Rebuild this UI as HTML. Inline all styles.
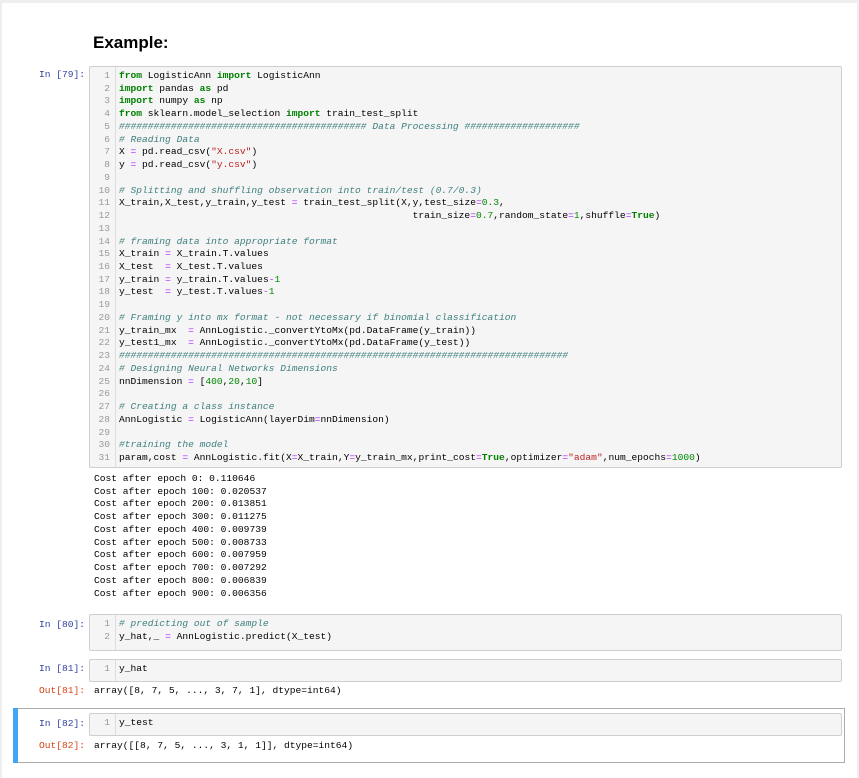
<!DOCTYPE html>
<html><head><style>
body{margin:0;width:859px;height:772px;background:#eee;position:relative;overflow:hidden;font-family:"Liberation Mono",monospace;}
#page{position:absolute;left:2px;top:3px;width:855px;height:775px;background:#fff;}
.a{position:absolute;}
.box{position:absolute;left:89px;width:751px;background:#f5f5f5;border:1px solid #cfcfcf;border-radius:2px;}
.gut{position:absolute;left:0;top:0;bottom:0;width:25px;border-right:1px solid #ddd;}
pre{margin:0;font-family:"Liberation Mono",monospace;font-size:9.6px;line-height:12.73px;color:#000;white-space:pre;}
.ln{position:absolute;left:0;width:20px;top:3px;text-align:right;color:#999;}
.code{position:absolute;left:29px;top:3px;}
.p{position:absolute;right:774px;font-size:9.6px;color:#303F9F;white-space:pre;}
.o{color:#D84315;}
.k{color:#008000;font-weight:bold}
.c{color:#408080;font-style:italic}
.e{color:#AA22FF}
.n{color:#080}
.s{color:#BA2121}
</style></head><body>
<div id="page"></div>
<div class="a" style="left:93px;top:33px;font-family:'Liberation Sans',sans-serif;font-weight:bold;font-size:17px;color:#000">Example:</div>

<div class="a p" style="top:69px">In [79]:</div>
<div class="box" style="top:66px;height:400px"><div class="gut"></div>
<pre class="ln">1
2
3
4
5
6
7
8
9
10
11
12
13
14
15
16
17
18
19
20
21
22
23
24
25
26
27
28
29
30
31</pre>
<pre class="code"><span class="k">from</span> LogisticAnn <span class="k">import</span> LogisticAnn
<span class="k">import</span> pandas <span class="k">as</span> pd
<span class="k">import</span> numpy <span class="k">as</span> np
<span class="k">from</span> sklearn.model_selection <span class="k">import</span> train_test_split
<span class="c">########################################### Data Processing ####################</span>
<span class="c"># Reading Data</span>
X <span class="e">=</span> pd.read_csv(<span class="s">"X.csv"</span>)
y <span class="e">=</span> pd.read_csv(<span class="s">"y.csv"</span>)

<span class="c"># Splitting and shuffling observation into train/test (0.7/0.3)</span>
X_train,X_test,y_train,y_test <span class="e">=</span> train_test_split(X,y,test_size<span class="e">=</span><span class="n">0.3</span>,
                                                   train_size<span class="e">=</span><span class="n">0.7</span>,random_state<span class="e">=</span><span class="n">1</span>,shuffle<span class="e">=</span><span class="k">True</span>)

<span class="c"># framing data into appropriate format</span>
X_train <span class="e">=</span> X_train.T.values
X_test  <span class="e">=</span> X_test.T.values
y_train <span class="e">=</span> y_train.T.values<span class="e">-</span><span class="n">1</span>
y_test  <span class="e">=</span> y_test.T.values<span class="e">-</span><span class="n">1</span>

<span class="c"># Framing y into mx format - not necessary if binomial classification</span>
y_train_mx  <span class="e">=</span> AnnLogistic._convertYtoMx(pd.DataFrame(y_train))
y_test1_mx  <span class="e">=</span> AnnLogistic._convertYtoMx(pd.DataFrame(y_test))
<span class="c">##############################################################################</span>
<span class="c"># Designing Neural Networks Dimensions</span>
nnDimension <span class="e">=</span> [<span class="n">400</span>,<span class="n">20</span>,<span class="n">10</span>]

<span class="c"># Creating a class instance</span>
AnnLogistic <span class="e">=</span> LogisticAnn(layerDim<span class="e">=</span>nnDimension)

<span class="c">#training the model</span>
param,cost <span class="e">=</span> AnnLogistic.fit(X<span class="e">=</span>X_train,Y<span class="e">=</span>y_train_mx,print_cost<span class="e">=</span><span class="k">True</span>,optimizer<span class="e">=</span><span class="s">"adam"</span>,num_epochs<span class="e">=</span><span class="n">1000</span>)</pre>
</div>
<pre class="a" style="left:94px;top:473px">Cost after epoch 0: 0.110646
Cost after epoch 100: 0.020537
Cost after epoch 200: 0.013851
Cost after epoch 300: 0.011275
Cost after epoch 400: 0.009739
Cost after epoch 500: 0.008733
Cost after epoch 600: 0.007959
Cost after epoch 700: 0.007292
Cost after epoch 800: 0.006839
Cost after epoch 900: 0.006356</pre>

<div class="a p" style="top:619px">In [80]:</div>
<div class="box" style="top:614px;height:35px"><div class="gut"></div>
<pre class="ln">1
2</pre>
<pre class="code"><span class="c"># predicting out of sample</span>
y_hat,_ <span class="e">=</span> AnnLogistic.predict(X_test)</pre></div>

<div class="a p" style="top:663px">In [81]:</div>
<div class="box" style="top:659px;height:21px"><div class="gut"></div>
<pre class="ln">1</pre><pre class="code">y_hat</pre></div>
<div class="a p o" style="top:685px">Out[81]:</div>
<pre class="a" style="left:94px;top:685px">array([8, 7, 5, ..., 3, 7, 1], dtype=int64)</pre>

<div class="a" style="left:13px;top:708px;width:831px;height:53px;border:1px solid #ababab;border-left:0;"></div>
<div class="a" style="left:13px;top:708px;width:5px;height:55px;background:#42A5F5"></div>
<div class="a p" style="top:718px">In [82]:</div>
<div class="box" style="top:713px;height:21px"><div class="gut"></div>
<pre class="ln">1</pre><pre class="code">y_test</pre></div>
<div class="a p o" style="top:740px">Out[82]:</div>
<pre class="a" style="left:94px;top:740px">array([[8, 7, 5, ..., 3, 1, 1]], dtype=int64)</pre>
</body></html>
